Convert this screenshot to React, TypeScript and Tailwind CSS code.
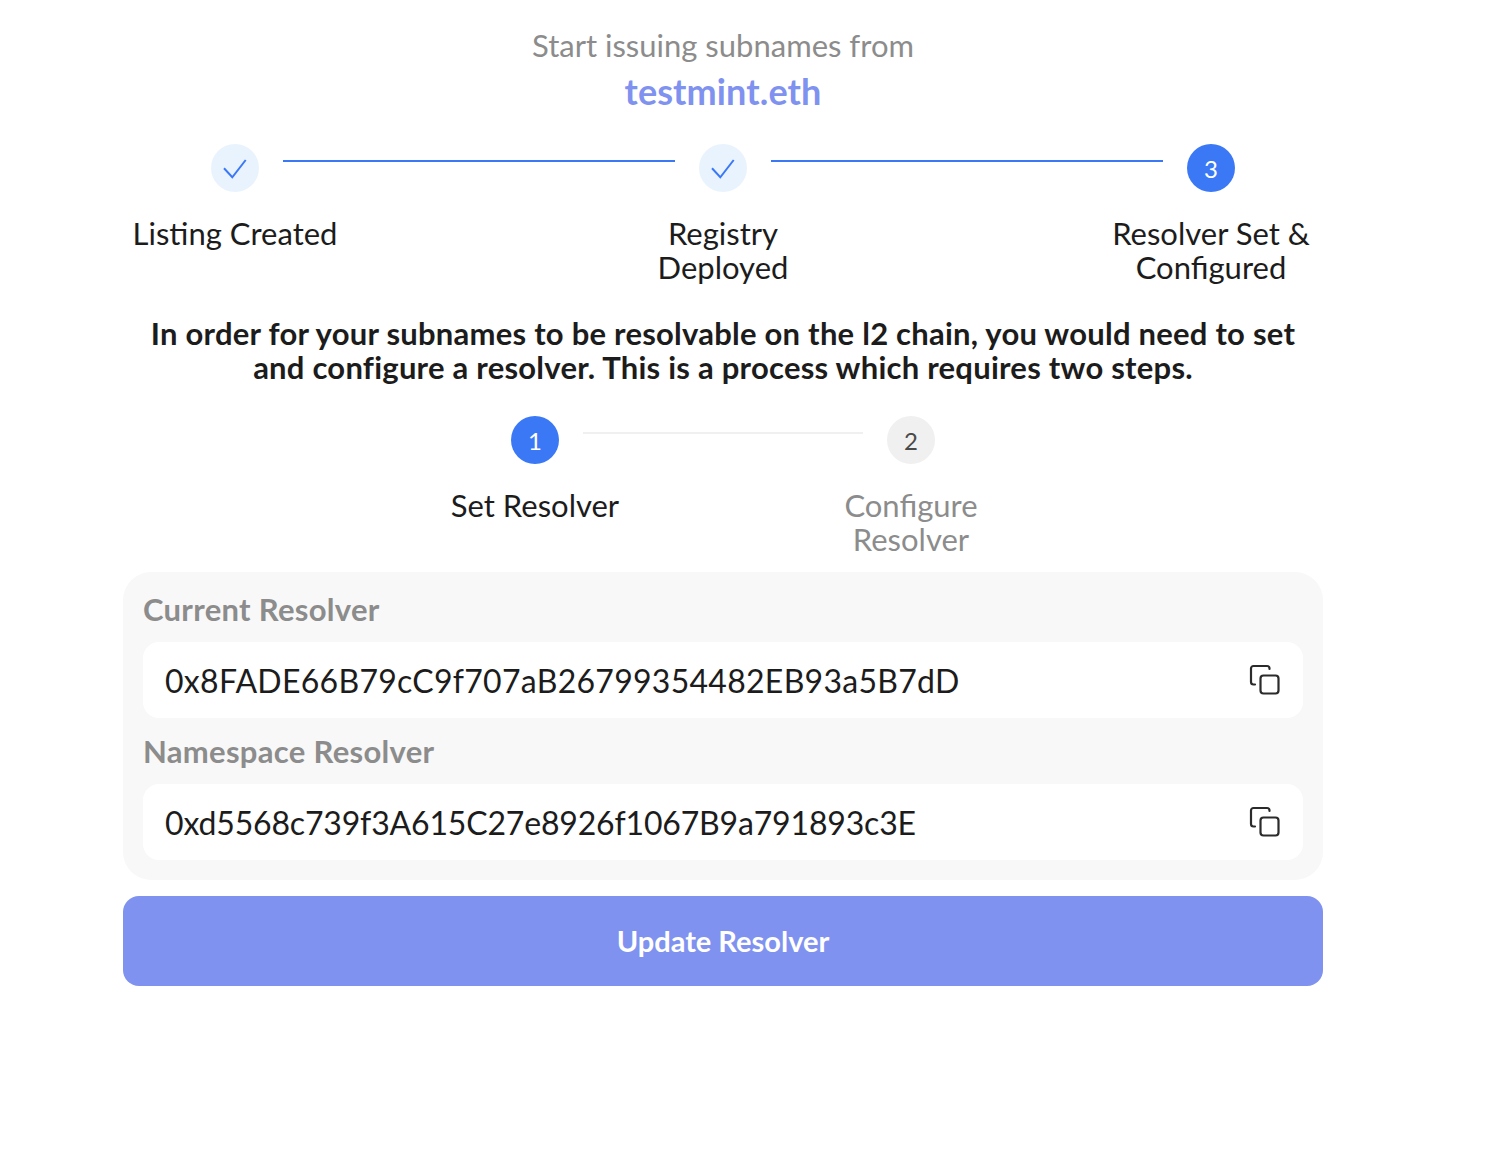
const FONT = "font-['Lato','Noto_Sans',sans-serif]";

function CheckIcon() {
  return (
    <svg width="26" height="26" viewBox="0 0 26 26" fill="none" stroke="#3b78f6" strokeWidth="2">
      <polyline points="2,13.3 10.3,22.3 23.7,5" />
    </svg>
  );
}

function CopyIcon() {
  return (
    <svg width="32" height="32" viewBox="0 0 32 32" fill="none" stroke="#2b2b2b" strokeWidth="2.2" strokeLinecap="round">
      <path d="M20.5 5V4.5a2.5 2.5 0 0 0-2.5-2.5H4.5A2.5 2.5 0 0 0 2 4.5V18a2.5 2.5 0 0 0 2.5 2.5H6" />
      <rect x="11.5" y="11.5" width="18" height="18" rx="3" />
    </svg>
  );
}

function Circle({ state, n }: { state: "done" | "active" | "todo"; n?: number }) {
  if (state === "done") {
    return (
      <div className="w-12 h-12 shrink-0 rounded-full bg-[#e9f3fe] flex items-center justify-center">
        <CheckIcon />
      </div>
    );
  }
  return (
    <div
      className={
        state === "active"
          ? "w-12 h-12 shrink-0 rounded-full bg-[#3b78f6] text-white flex items-center justify-center text-[24px] pt-px"
          : "w-12 h-12 shrink-0 rounded-full bg-[#f0f0f0] text-[#4a4a4a] flex items-center justify-center text-[24px] pt-px"
      }
    >
      {n}
    </div>
  );
}

function StepLabel({ children, muted }: { children: React.ReactNode; muted?: boolean }) {
  return (
    <div
      className={
        muted
          ? "w-[224px] text-center text-[31px] leading-[34px] text-[#8c8c8c]"
          : "w-[224px] text-center text-[31px] leading-[34px] text-[#1c1c1c]"
      }
    >
      {children}
    </div>
  );
}

function AddressField({ label, value, spacing }: { label: string; value: string; spacing: string }) {
  return (
    <div>
      <div className="h-[34px] mb-4 text-[31px] leading-[34px] font-bold tracking-[0.3px] text-[#8c8c8c]">{label}</div>
      <div className="h-[76px] rounded-2xl bg-white pl-[22px] pr-[22px] flex items-center justify-between">
        <span className={`text-[32px] pt-px text-[#1c1c1c] ${spacing}`}>{value}</span>
        <CopyIcon />
      </div>
    </div>
  );
}

export default function App() {
  return (
    <main className={`${FONT} min-h-[1162px] bg-white pl-[123px] pt-[27px]`}>
      <div className="w-[1200px] flex flex-col">
        {/* title */}
        <p className="text-center text-[31px] leading-[36px] text-[#8c8c8c]">Start issuing subnames from</p>
        <h1 className="mt-[10px] text-center text-[36px] leading-[36px] font-bold tracking-[0.1px] text-[#7f92f0]">testmint.eth</h1>

        {/* main steps */}
        <div className="mt-[35px] px-[88px] flex">
          <Circle state="done" />
          <div className="flex-1 mx-6 mt-4 h-[2px] bg-[#3b78f6]" />
          <Circle state="done" />
          <div className="flex-1 mx-6 mt-4 h-[2px] bg-[#3b78f6]" />
          <Circle state="active" n={3} />
        </div>
        <div className="mt-[24px] flex justify-between">
          <StepLabel>Listing Created</StepLabel>
          <StepLabel>Registry Deployed</StepLabel>
          <StepLabel>Resolver Set &amp; Configured</StepLabel>
        </div>

        <p className="mt-[32px] px-6 text-center text-[31px] leading-[34px] font-bold tracking-[0.24px] text-[#1c1c1c]">
          In order for your subnames to be resolvable on the l2 chain, you would need to set and configure a resolver. This is a process which requires two steps.
        </p>

        {/* resolver steps */}
        <div className="mt-[32px] w-[424px] mx-auto flex">
          <Circle state="active" n={1} />
          <div className="flex-1 mx-6 mt-4 h-[2px] bg-[#f0f0f0]" />
          <Circle state="todo" n={2} />
        </div>
        <div className="mt-[24px] w-[600px] mx-auto flex justify-between">
          <StepLabel>Set Resolver</StepLabel>
          <StepLabel muted>Configure Resolver</StepLabel>
        </div>

        {/* resolver panel */}
        <div className="mt-[16px] rounded-[28px] bg-[#f8f8f8] p-5 flex flex-col gap-4">
          <AddressField label="Current Resolver" value="0x8FADE66B79cC9f707aB26799354482EB93a5B7dD" spacing="tracking-[0.28px]" />
          <AddressField label="Namespace Resolver" value="0xd5568c739f3A615C27e8926f1067B9a791893c3E" spacing="tracking-[-0.17px]" />
        </div>

        <button className="mt-4 h-[90px] rounded-2xl bg-[#7f92f0] text-white text-[29px] font-bold">
          Update Resolver
        </button>
      </div>
    </main>
  );
}
